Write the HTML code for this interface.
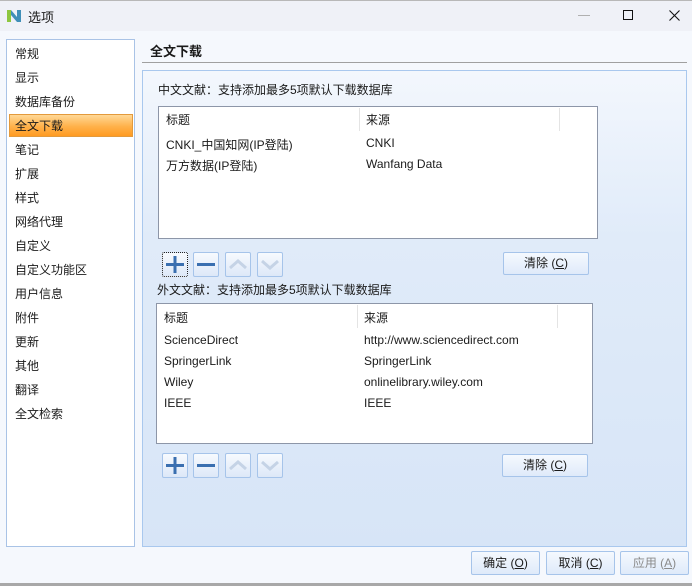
<!DOCTYPE html>
<html><head><meta charset="utf-8"><style>
*{box-sizing:border-box;margin:0;padding:0}
body{width:692px;height:586px;overflow:hidden;background:#f5f8fd;font-family:"Liberation Sans","Noto Sans CJK SC",sans-serif;font-size:12px;color:#1a1a1a;position:relative}
.a{position:absolute}
.title{left:0;top:0;width:692px;height:31px;background:#eff1f7;border-top:1px solid #b8b8b8}
.list{left:6px;top:39px;width:129px;height:508px;background:#fff;border:1px solid #a9c3e6}
.item{position:absolute;left:8px;font-size:12px}
.sel{position:absolute;left:2px;top:74px;width:124px;height:23px;background:linear-gradient(#ffd896,#ffb14a 55%,#ff9b22);border:1px solid #e39a3c}
.panel{left:142px;top:70px;width:545px;height:477px;border:1px solid #a9c8ee;background:linear-gradient(#f3f7fd,#e0ebf9 35%,#d7e5f7)}
.tbl{background:#fff;border:1px solid #8d96a8}
.btn{position:absolute;border:1px solid #a6c4ea;background:linear-gradient(#f5f9fe,#dfeafa);border-radius:2px;text-align:center;font-size:12px;line-height:21px}
.ib{position:absolute;width:26px;height:25px;border:1px solid #a6c4ea;background:linear-gradient(#f7fafe,#dde8f8);border-radius:2px}
</style></head><body>
<div class="a title"></div>
<svg class="a" style="left:6px;top:7px" width="16" height="16" viewBox="0 0 16 16"><path d="M1 3h4l6 7V3h4v12h-4L5 8v7H1z" fill="#3f8fb8"/><path d="M1 3h4v12H1z" fill="#8dc63f"/></svg>
<div class="a" style="left:28px;top:7px;font-size:13px">选项</div>
<div class="a" style="left:578px;top:15px;width:12px;height:1px;background:#b0b0b0"></div>
<div class="a" style="left:623px;top:10px;width:10px;height:10px;border:1px solid #111"></div>
<svg class="a" style="left:669px;top:10px" width="11" height="11"><path d="M0.5 0.5L10.5 10.5M10.5 0.5L0.5 10.5" stroke="#111" stroke-width="1.1"/></svg>

<div class="a list">
<div class="sel"></div>
<div class="item" style="top:5px">常规</div>
<div class="item" style="top:29px">显示</div>
<div class="item" style="top:53px">数据库备份</div>
<div class="item" style="top:77px">全文下载</div>
<div class="item" style="top:101px">笔记</div>
<div class="item" style="top:125px">扩展</div>
<div class="item" style="top:149px">样式</div>
<div class="item" style="top:173px">网络代理</div>
<div class="item" style="top:197px">自定义</div>
<div class="item" style="top:221px">自定义功能区</div>
<div class="item" style="top:245px">用户信息</div>
<div class="item" style="top:269px">附件</div>
<div class="item" style="top:293px">更新</div>
<div class="item" style="top:317px">其他</div>
<div class="item" style="top:341px">翻译</div>
<div class="item" style="top:365px">全文检索</div>
</div>

<div class="a" style="left:150px;top:41px;font-weight:bold;font-size:13px">全文下载</div>
<div class="a" style="left:142px;top:62px;width:545px;height:1px;background:#a0a0a0"></div>
<div class="a panel"></div>

<div class="a" style="left:158px;top:81px">中文文献：支持添加最多5项默认下载数据库</div>
<div class="a tbl" style="left:158px;top:106px;width:440px;height:133px">
<div class="a" style="left:7px;top:4px">标题</div>
<div class="a" style="left:200px;top:1px;width:1px;height:23px;background:#e4e4e4"></div>
<div class="a" style="left:207px;top:4px">来源</div>
<div class="a" style="left:400px;top:1px;width:1px;height:23px;background:#e4e4e4"></div>
<div class="a" style="left:7px;top:29px">CNKI_中国知网(IP登陆)</div><div class="a" style="left:207px;top:29px">CNKI</div>
<div class="a" style="left:7px;top:50px">万方数据(IP登陆)</div><div class="a" style="left:207px;top:50px">Wanfang Data</div>
</div>

<div class="ib" style="left:162px;top:252px;border:1px dotted #222"><svg width="24" height="23"><path d="M12 3v17M3 11.5h18" stroke="#3a6fb0" stroke-width="3"/></svg></div>
<div class="ib" style="left:193px;top:252px"><svg width="24" height="23"><path d="M3 11.5h18" stroke="#3a6fb0" stroke-width="3"/></svg></div>
<div class="ib" style="left:225px;top:252px"><svg width="24" height="23"><path d="M4 15l8-7 8 7" stroke="#c5d3e6" stroke-width="3" fill="none"/></svg></div>
<div class="ib" style="left:257px;top:252px"><svg width="24" height="23"><path d="M4 8l8 7 8-7" stroke="#c5d3e6" stroke-width="3" fill="none"/></svg></div>
<div class="btn" style="left:503px;top:252px;width:86px;height:23px">清除 (<u>C</u>)</div>

<div class="a" style="left:157px;top:281px">外文文献：支持添加最多5项默认下载数据库</div>
<div class="a tbl" style="left:156px;top:303px;width:437px;height:141px">
<div class="a" style="left:7px;top:5px">标题</div>
<div class="a" style="left:200px;top:1px;width:1px;height:23px;background:#e4e4e4"></div>
<div class="a" style="left:207px;top:5px">来源</div>
<div class="a" style="left:400px;top:1px;width:1px;height:23px;background:#e4e4e4"></div>
<div class="a" style="left:7px;top:29px">ScienceDirect</div><div class="a" style="left:207px;top:29px">http://www.sciencedirect.com</div>
<div class="a" style="left:7px;top:50px">SpringerLink</div><div class="a" style="left:207px;top:50px">SpringerLink</div>
<div class="a" style="left:7px;top:71px">Wiley</div><div class="a" style="left:207px;top:71px">onlinelibrary.wiley.com</div>
<div class="a" style="left:7px;top:92px">IEEE</div><div class="a" style="left:207px;top:92px">IEEE</div>
</div>

<div class="ib" style="left:162px;top:453px"><svg width="24" height="23"><path d="M12 3v17M3 11.5h18" stroke="#3a6fb0" stroke-width="3"/></svg></div>
<div class="ib" style="left:193px;top:453px"><svg width="24" height="23"><path d="M3 11.5h18" stroke="#3a6fb0" stroke-width="3"/></svg></div>
<div class="ib" style="left:225px;top:453px"><svg width="24" height="23"><path d="M4 15l8-7 8 7" stroke="#c5d3e6" stroke-width="3" fill="none"/></svg></div>
<div class="ib" style="left:257px;top:453px"><svg width="24" height="23"><path d="M4 8l8 7 8-7" stroke="#c5d3e6" stroke-width="3" fill="none"/></svg></div>
<div class="btn" style="left:502px;top:454px;width:86px;height:23px">清除 (<u>C</u>)</div>

<div class="btn" style="left:471px;top:551px;width:69px;height:24px;line-height:22px">确定 (<u>O</u>)</div>
<div class="btn" style="left:546px;top:551px;width:69px;height:24px;line-height:22px">取消 (<u>C</u>)</div>
<div class="btn" style="left:620px;top:551px;width:69px;height:24px;line-height:22px;color:#8a8a8a">应用 (<u>A</u>)</div>
<div class="a" style="left:0;top:583px;width:692px;height:3px;background:#a8a8a8"></div>
</body></html>
